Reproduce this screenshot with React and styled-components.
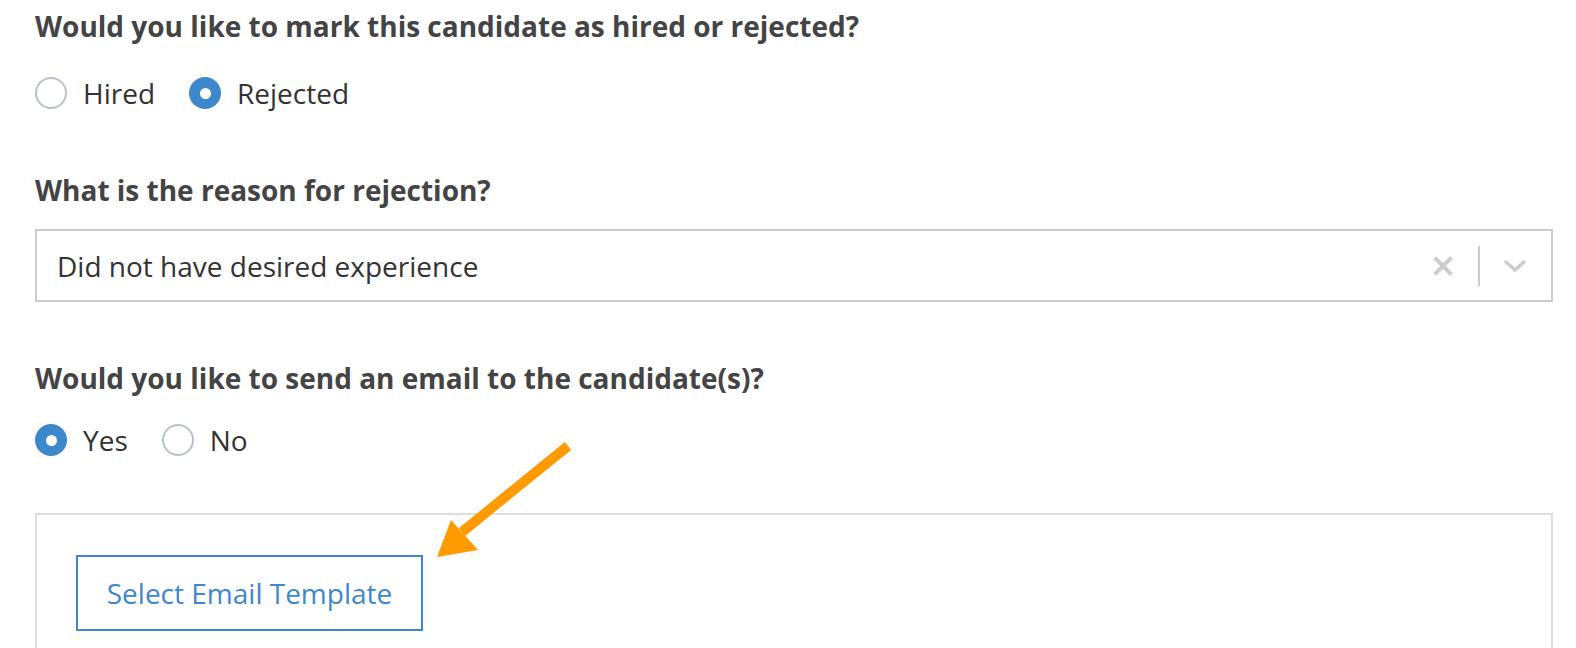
import React from 'react'
import styled, { createGlobalStyle } from 'styled-components'

const Global = createGlobalStyle`
  body {
    margin: 0;
    background: #fff;
    font-family: "Open Sans", "Noto Sans", sans-serif;
  }
`

const Page = styled.div`
  position: relative;
  width: 1576px;
  height: 648px;
  overflow: hidden;
  box-sizing: border-box;
  padding: 10px 23px 0 35px;
`

const Question = styled.h2`
  margin: ${({ top }) => top || 0}px 0 0;
  font-size: 28px;
  line-height: 32px;
  font-weight: 700;
  color: #444;
`

const RadioRow = styled.div`
  display: flex;
  align-items: center;
  gap: 34px;
  margin-top: ${({ top }) => top}px;
  height: 32px;
`

const Option = styled.label`
  display: flex;
  align-items: center;
  gap: 16px;
  font-size: 28px;
  color: #333;
`

const Circle = styled.span`
  box-sizing: border-box;
  width: 32px;
  height: 32px;
  border-radius: 50%;
  display: flex;
  align-items: center;
  justify-content: center;
  border: ${({ checked }) => (checked ? 'none' : '2px solid #b9c1c9')};
  background: ${({ checked }) => (checked ? '#3d88cc' : '#fff')};
  &::after {
    content: '';
    display: ${({ checked }) => (checked ? 'block' : 'none')};
    width: 11px;
    height: 11px;
    border-radius: 50%;
    background: #fff;
  }
`

const Select = styled.div`
  margin-top: 23px;
  height: 73px;
  box-sizing: border-box;
  border: 2px solid #ccc;
  display: flex;
  align-items: center;
  padding: 0 24px 0 20px;
`

const Value = styled.div`
  flex: 1;
  font-size: 28px;
  color: #333;
`

const Indicators = styled.div`
  display: flex;
  align-items: center;
  gap: 18px;
`

const ClearIcon = styled.svg`
  margin-right: 7px;
`

const Divider = styled.span`
  width: 2px;
  height: 40px;
  background: #ccc;
  margin-right: 5px;
`

const Panel = styled.div`
  margin-top: 57px;
  height: 200px;
  border: 2px solid #ddd;
  padding: 40px 39px;
`

const TemplateButton = styled.button`
  box-sizing: border-box;
  width: 347px;
  height: 76px;
  background: #fff;
  border: 2px solid #3d88cc;
  color: #3d88cc;
  font-family: inherit;
  font-size: 28px;
  padding: 0;
  cursor: pointer;
`

const Annotation = styled.svg`
  position: absolute;
  left: 0;
  top: 0;
  pointer-events: none;
`

const Radio = ({ label, checked }) => (
  <Option>
    <Circle checked={checked} />
    {label}
  </Option>
)

const App = () => (
  <>
    <Global />
    <Page>
      <Question>Would you like to mark this candidate as hired or rejected?</Question>
      <RadioRow top={35}>
        <Radio label="Hired" />
        <Radio label="Rejected" checked />
      </RadioRow>

      <Question top={65}>What is the reason for rejection?</Question>
      <Select>
        <Value>Did not have desired experience</Value>
        <Indicators>
          <ClearIcon width="20" height="20" viewBox="0 0 20 20">
            <path d="M3 3 L17 17 M17 3 L3 17" stroke="#ccc" strokeWidth="4" strokeLinecap="square" />
          </ClearIcon>
          <Divider />
          <svg width="24" height="14" viewBox="0 0 24 14">
            <path d="M2 2 L12 11 L22 2" stroke="#ccc" strokeWidth="3.5" fill="none" />
          </svg>
        </Indicators>
      </Select>

      <Question top={60}>Would you like to send an email to the candidate(s)?</Question>
      <RadioRow top={30}>
        <Radio label="Yes" checked />
        <Radio label="No" />
      </RadioRow>

      <Panel>
        <TemplateButton>Select Email Template</TemplateButton>
      </Panel>

      <Annotation width="1576" height="648">
        <line x1="568" y1="446" x2="462" y2="532" stroke="#ff9a00" strokeWidth="10" />
        <polygon points="437,557 451,520 478,550" fill="#ff9a00" />
      </Annotation>
    </Page>
  </>
)

export default App
